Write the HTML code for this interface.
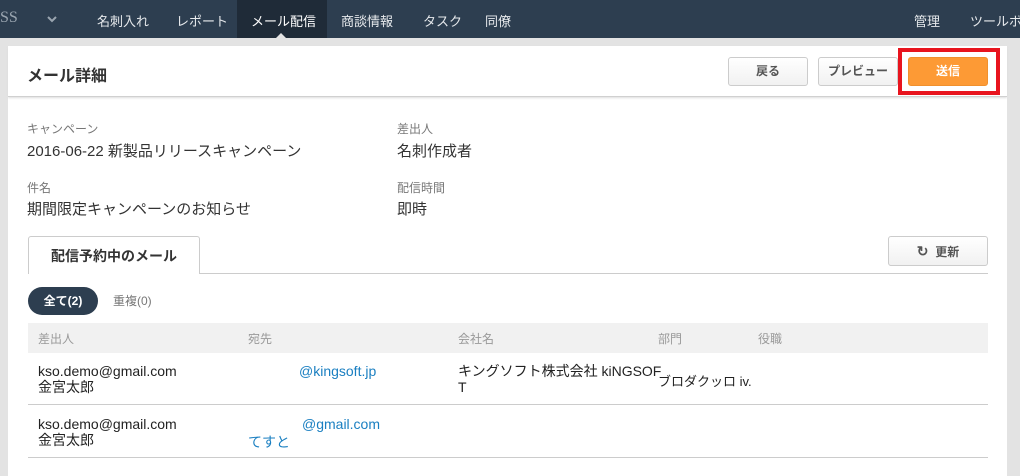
<!DOCTYPE html>
<html><head><meta charset="utf-8"><style>
*{box-sizing:border-box;margin:0;padding:0}
body{width:1020px;height:469px;overflow:hidden;background:#e3e3e3;font-family:"Liberation Sans","Noto Sans CJK JP",sans-serif;color:#333;position:relative}
.nav{position:absolute;left:0;top:0;width:1020px;height:38px;background:#2d3e50;color:#e6e9ec;font-size:13px;overflow:hidden}
.nav span{position:absolute;top:11px;white-space:nowrap}
.act{position:absolute;left:237px;top:0;width:90px;height:38px;background:#1f2b38}
.caret{position:absolute;left:276px;top:33px;border:5px solid transparent;border-bottom-color:#e3e3e3;border-top:0}
.panel{position:absolute;left:8px;top:46px;width:999px;height:430px;background:#fff}
.hdr{position:absolute;left:0;top:0;width:999px;height:51px;border-bottom:1px solid #d0d0d0;box-shadow:0 1px 2px #ddd}
.btn{position:absolute;border:1px solid #ccc;border-radius:3px;background:linear-gradient(#fff,#f1f1f1);font-size:12px;font-weight:bold;color:#555;text-align:center;line-height:27px;height:29px}
.t{position:absolute;white-space:nowrap}
.lbl{font-size:12px;color:#777}
.val{font-size:15px;color:#333}
.a{color:#1a7fc1}
</style></head><body>
<div class="nav">
<span style="left:0;color:#9aa5b0;font-family:'Liberation Serif',serif;font-size:16px;top:9px">SS</span>
<svg style="position:absolute;left:47px;top:15px" width="10" height="8"><path d="M1 2l4 4 4-4" stroke="#9aa5b0" stroke-width="2" fill="none"/></svg>
<span style="left:97px">名刺入れ</span>
<span style="left:176px">レポート</span>
<div class="act"></div><div class="caret"></div>
<span style="left:251px;color:#fff">メール配信</span>
<span style="left:341px">商談情報</span>
<span style="left:423px">タスク</span>
<span style="left:485px">同僚</span>
<span style="left:914px">管理</span>
<span style="left:970px">ツールボ</span>
</div>
<div class="panel">
<div class="hdr">
<div class="t" style="left:19px;top:16px;font-size:16px;font-weight:bold;color:#333">メール詳細</div>
<div class="btn" style="left:720px;top:11px;width:80px">戻る</div>
<div class="btn" style="left:810px;top:11px;width:80px">プレビュー</div>
<div style="position:absolute;left:890px;top:2px;width:102px;height:47px;border:4px solid #e8141e"></div>
<div class="btn" style="left:900px;top:11px;width:80px;background:#fd9a35;border-color:#f0902e;color:#fff">送信</div>
</div>
<div class="t lbl" style="left:19px;top:74px">キャンペーン</div>
<div class="t val" style="left:19px;top:94px">2016-06-22 新製品リリースキャンペーン</div>
<div class="t lbl" style="left:389px;top:74px">差出人</div>
<div class="t val" style="left:389px;top:94px">名刺作成者</div>
<div class="t lbl" style="left:19px;top:133px">件名</div>
<div class="t val" style="left:19px;top:152px">期間限定キャンペーンのお知らせ</div>
<div class="t lbl" style="left:389px;top:133px">配信時間</div>
<div class="t val" style="left:389px;top:152px">即時</div>
<div style="position:absolute;left:20px;top:227px;width:960px;border-top:1px solid #ccc"></div>
<div style="position:absolute;left:20px;top:190px;width:172px;height:38px;border:1px solid #ccc;border-bottom:none;border-radius:3px 3px 0 0;background:#fff;font-size:14px;font-weight:bold;text-align:center;line-height:38px">配信予約中のメール</div>
<div class="btn" style="left:880px;top:190px;width:100px;height:30px;line-height:28px"><span style="font-size:14px">↻</span>&nbsp; 更新</div>
<div style="position:absolute;left:20px;top:241px;width:70px;height:28px;border-radius:14px;background:#2d3e50;color:#fff;font-size:12px;font-weight:bold;text-align:center;line-height:28px">全て(2)</div>
<div class="t" style="left:105px;top:246px;font-size:12px;color:#777">重複(0)</div>
<div style="position:absolute;left:20px;top:277px;width:960px;height:30px;background:#f1f1f1"></div>
<div class="t lbl" style="left:30px;top:284px;color:#999">差出人</div>
<div class="t lbl" style="left:240px;top:284px;color:#999">宛先</div>
<div class="t lbl" style="left:450px;top:284px;color:#999">会社名</div>
<div class="t lbl" style="left:650px;top:284px;color:#999">部門</div>
<div class="t lbl" style="left:750px;top:284px;color:#999">役職</div>
<div class="t" style="left:30px;top:317px;font-size:14px;line-height:16px;color:#222">kso.demo@gmail.com<br>金宮太郎</div>
<div class="t a" style="left:291px;top:317px;font-size:14px">@kingsoft.jp</div>
<div class="t" style="left:450px;top:317px;font-size:14px;line-height:16px;color:#222">キングソフト株式会社 kiNGSOF<br>T</div>
<div class="t" style="left:650px;top:325px;font-size:13px;color:#222">ブロダクッロ iv.</div>
<div style="position:absolute;left:20px;top:358px;width:960px;border-top:1px solid #ccc"></div>
<div class="t" style="left:30px;top:370px;font-size:14px;line-height:16px;color:#222">kso.demo@gmail.com<br>金宮太郎</div>
<div class="t a" style="left:294px;top:370px;font-size:14px">@gmail.com</div>
<div class="t a" style="left:240px;top:386px;font-size:14px">てすと</div>
<div style="position:absolute;left:20px;top:411px;width:960px;border-top:1px solid #ccc"></div>
</div>
</body></html>
